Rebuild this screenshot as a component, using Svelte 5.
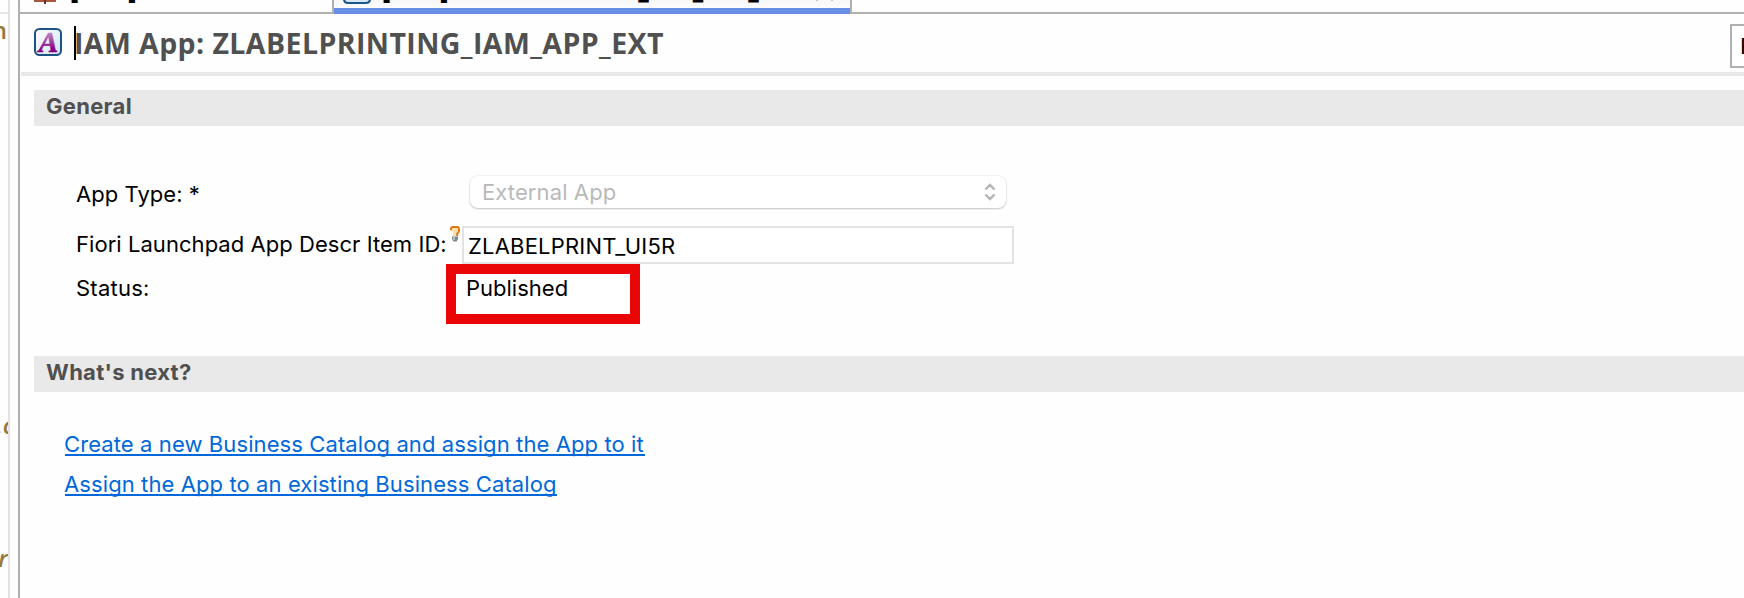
<script>
  const edge = [
    { t: 'n', top: 14, right: 1, style: 'normal' },
    { t: '.c', top: 409, right: -6, style: 'italic' },
    { t: 'r', top: 542, right: 0, style: 'italic' }
  ];
  const links = [
    { t: 'Create a new Business Catalog and assign the App to it', w: 580 },
    { t: 'Assign the App to an existing Business Catalog', w: 492 }
  ];
</script>

<div class="window">
  <aside class="code">
    <div class="rule"></div>
    {#each edge as e}<span class="frag" style="top:{e.top}px; right:{e.right}px; font-style:{e.style}">{e.t}</span>{/each}
  </aside>
  <div class="gutter"></div>
  <main>
    <nav>
      <div class="tab first">
        <svg width="22" height="4" viewBox="0 0 22 4"><path d="M0 0h22v2H0z" fill="#a9583f" /><path d="M10 0h2v4h-2z" fill="#6d3325" /></svg>
        <span class="tabtext"><b>[TRL]</b></span>
      </div>
      <div class="tab active">
        <svg width="28" height="5" viewBox="0 0 28 5"><path d="M1 -8V-1Q1 3 5 3H23Q27 3 27 -1V-8" fill="#d6e7f5" stroke="#1c5688" stroke-width="2" /></svg>
        <span class="tabtext name"><b>[TRL]</b> <em>ZLABELPRINTING</em>_IAM_APP_EXT</span>
        <svg class="close" width="17" height="2" viewBox="0 0 17 2"><path d="M0 0h2v1H0zM15 0h2v1h-2z" fill="#c8c8c8" /></svg>
      </div>
      <div class="tab rest"></div>
    </nav>

    <header>
      <svg class="logo" width="28" height="28" viewBox="0 0 28 28">
        <defs>
          <linearGradient id="bg" x1="0" y1="0" x2="1" y2="1"><stop offset="0" stop-color="#fff" /><stop offset="1" stop-color="#cfe3f4" /></linearGradient>
          <linearGradient id="ink" x1="0" y1="0" x2="0" y2="1"><stop offset="0.2" stop-color="#c08bc8" /><stop offset="0.75" stop-color="#860083" /></linearGradient>
        </defs>
        <rect x="1" y="1" width="26" height="26" rx="4.5" fill="url(#bg)" stroke="#1d5384" stroke-width="2" />
        <text x="14.5" y="23.5" text-anchor="middle" font-family="Liberation Serif, serif" font-weight="700" font-style="italic" font-size="29" fill="url(#ink)" stroke="url(#ink)" stroke-width="0.6">A</text>
      </svg>
      <span class="caret"></span>
      <h1>IAM App: ZLABELPRINTING_IAM_APP_EXT</h1>
      <button>P</button>
    </header>

    <section>
      <h2>General</h2>
      <div class="form">
        <div class="row r1"><span class="lab type">App Type: *</span>
          <div class="select"><span>External App</span>
            <svg width="12" height="18" viewBox="0 0 12 18" fill="none" stroke="#b4b4b4" stroke-width="2.4"><path d="M1.500 6.500 6 2l4.500 4.500M1.500 11.500 6 16l4.500-4.500" /></svg>
          </div>
        </div>
        <div class="row r2"><span class="lab long">Fiori Launchpad App Descr Item ID:</span>
          <svg class="bulb" width="10" height="16" viewBox="0 0 10 16">
            <path d="M1 3.500 2.500 1.500H8L8.500 6 7 10H3V7L1.500 5z" fill="#fbdfae" />
            <path d="M1 4.200V2.500Q1 1 2.800 1H7Q9 1 9 3V5Q9 6.500 7.200 7.500V10" fill="none" stroke="#dc780c" stroke-width="1.900" />
            <path d="M2 10.500h6V13L6.500 15.500h-3L2 13z" fill="#7d8794" /><path d="M3 11h2v3H3z" fill="#b6bdc6" />
          </svg>
          <div class="input">ZLABELPRINT_UI5R</div>
        </div>
        <div class="row r3"><span class="lab status">Status:</span><div class="mark">Published</div></div>
      </div>
    </section>

    <section class="next">
      <h2>What's next?</h2>
      <div class="links">
        {#each links as l}<a href="#top" style="width:{l.w}px">{l.t}</a>{/each}
      </div>
    </section>
  </main>
</div>

<style>
  :global(body) { margin: 0; overflow: hidden; background: #fefefe; }
  .window { display: flex; width: 1744px; height: 598px; overflow: hidden; background: #fefefe; font: 22px/26px Inter, sans-serif; color: #000; }
  .code { position: relative; width: 8px; overflow: hidden; flex: none; }
  .rule { margin-top: 12px; height: 2px; background: #e6e6e6; }
  .frag { position: absolute; color: #957a40; font: 600 24px/32px "Open Sans", sans-serif; }
  .gutter { width: 8px; border-left: 2px solid #e3e3e3; border-right: 2px solid #b0b0b0; flex: none; }
  main { flex: 1; min-width: 0; display: flex; flex-direction: column; }
  nav { display: flex; height: 14px; overflow: hidden; flex: none; }
  .tab { box-sizing: border-box; height: 14px; border-bottom: 2px solid #b0b0b0; display: flex; align-items: flex-start; flex: none; }
  .tab svg { flex: none; }
  .tabtext { font: 700 22px/26px Inter, sans-serif; margin-top: -21px; white-space: nowrap; }
  .tabtext b { letter-spacing: 1.8px; }
  .tabtext em { font-style: normal; letter-spacing: -0.5px; }
  .name { width: 426px; overflow: hidden; }
  .first { width: 312px; padding-left: 14px; gap: 14px; }
  .active { width: 520px; border: solid #b0b0b0; border-width: 0 2px; padding-left: 9px; gap: 11px; background: linear-gradient(#f7f7f7, #fcfcfc 8px, #688fe6 8px); }
  .close { margin-left: -3px; }
  .tab.rest { flex: 1; }
  header { display: flex; height: 58px; border-bottom: 4px solid #e8e8e8; margin-left: 1px; padding-left: 13px; flex: none; }
  .logo { margin-top: 14px; flex: none; }
  .caret { width: 2px; height: 34px; background: #000; margin: 12px 0 0 12px; flex: none; }
  h1 { margin: 9px 0 0 -2px; font: 700 28.500px/40px "Open Sans", sans-serif; letter-spacing: 0.42px; color: #505050; white-space: nowrap; }
  button { box-sizing: border-box; width: 160px; height: 44px; margin: 10px -146px 0 auto; padding: 0 0 0 8px; border: 2px solid #b0b0b0; background: #fff; font: 22px/26px Inter, sans-serif; text-align: left; color: #000; flex: none; }
  section { padding: 14px 0 0 14px; }
  h2 { margin: 0; height: 36px; padding-left: 12px; background: #e9e9e9; color: #505050; font: 700 22px/33px Inter, sans-serif; letter-spacing: 0.3px; }
  .form { padding-left: 42px; height: 216px; }
  .row { display: flex; white-space: nowrap; }
  .lab { letter-spacing: 0.05px; flex: none; }
  .r1 { padding-top: 50px; height: 50px; }
  .type { width: 394px; margin-top: 5px; }
  .select { box-sizing: border-box; width: 536px; height: 32px; border-radius: 8px; background: #fff; box-shadow: 0 0 2px #0002, 0 1px 2px #0003; display: flex; justify-content: space-between; padding: 3px 10px 0 12px; color: #b9b9b9; letter-spacing: 0.1px; }
  .select svg { margin-top: 4px; }
  .long { width: 374px; margin-top: 5px; }
  .bulb { flex: none; }
  .input { box-sizing: border-box; width: 552px; height: 38px; border: 2px solid #e3e3e3; background: #fff; margin-left: 2px; padding: 5px 0 0 4px; letter-spacing: 0.2px; }
  .status { width: 370px; margin-top: 11px; letter-spacing: 0.25px; }
  .mark { box-sizing: border-box; width: 194px; height: 60px; border: 10px solid #ea0606; background: #fff; padding: 1px 0 0 10px; }
  .links { display: flex; flex-direction: column; gap: 15px; padding: 39px 0 0 31px; }
  a { display: block; color: #0068da; text-decoration: none; border-bottom: 2px solid; height: 23px; white-space: nowrap; text-indent: -1px; letter-spacing: 0.1px; }
</style>
